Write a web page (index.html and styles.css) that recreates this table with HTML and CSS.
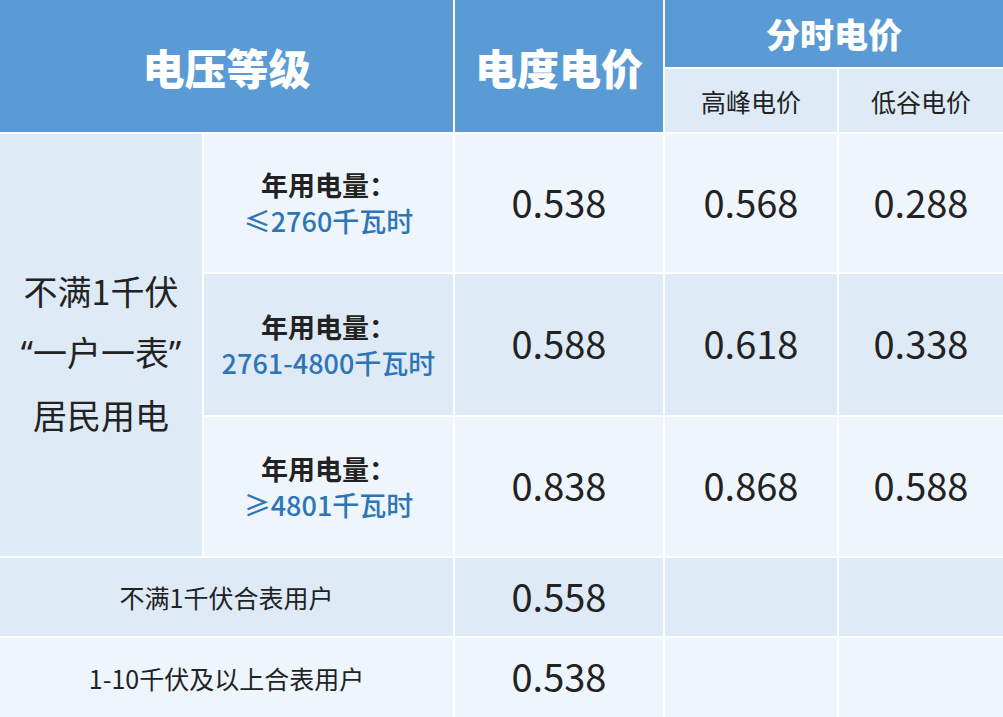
FILE: index.html
```html
<!DOCTYPE html>
<html lang="zh-CN">
<head>
<meta charset="utf-8">
<title>电价表</title>
<link rel="stylesheet" href="styles.css">
</head>
<body>
<div class="table">
  <div class="cell head h-level">电压等级</div>
  <div class="cell head h-price">电度电价</div>
  <div class="cell head h-tou">分时电价</div>
  <div class="cell sub h-peak">高峰电价</div>
  <div class="cell sub h-valley">低谷电价</div>
  <div class="cell dark resid">
    <div class="resid-text">不满1千伏<br><span class="q">“</span>一户一表<span class="q">”</span><br>居民用电</div>
  </div>

  <div class="cell light tier"><span class="tier-label">年用电量：</span><span class="tier-range">≤2760千瓦时</span></div>
  <div class="cell light num">0.538</div>
  <div class="cell light num">0.568</div>
  <div class="cell light num">0.288</div>

  <div class="cell dark tier"><span class="tier-label">年用电量：</span><span class="tier-range">2761-4800千瓦时</span></div>
  <div class="cell dark num">0.588</div>
  <div class="cell dark num">0.618</div>
  <div class="cell dark num">0.338</div>

  <div class="cell light tier"><span class="tier-label">年用电量：</span><span class="tier-range">≥4801千瓦时</span></div>
  <div class="cell light num">0.838</div>
  <div class="cell light num">0.868</div>
  <div class="cell light num">0.588</div>

  <div class="cell dark label wide">不满1千伏合表用户</div>
  <div class="cell dark num">0.558</div>
  <div class="cell dark"></div>
  <div class="cell dark"></div>

  <div class="cell light label wide">1-10千伏及以上合表用户</div>
  <div class="cell light num">0.538</div>
  <div class="cell light"></div>
  <div class="cell light"></div>
</div>
</body>
</html>
```

FILE: styles.css
```css
html, body {
  margin: 0;
  padding: 0;
  background: #ffffff;
  overflow: hidden;
}

body {
  font-family: "Noto Sans CJK SC", sans-serif;
  color: #222222;
}

.table {
  display: grid;
  width: 1003px;
  height: 717px;
  grid-template-columns: 202px 249px 208px 172px 1fr;
  grid-template-rows: 67px 63px 138px 141px 139px 78px 1fr;
  gap: 2px;
  background: #ffffff;
}

.cell {
  display: flex;
  align-items: center;
  justify-content: center;
  text-align: center;
  min-width: 0;
}

.head {
  background: #5b9bd5;
  color: #ffffff;
  font-weight: 900;
}

.h-level {
  grid-column: 1 / 3;
  grid-row: 1 / 3;
  font-size: 42px;
}

.h-price {
  grid-column: 3 / 4;
  grid-row: 1 / 3;
  font-size: 42px;
}

.h-tou {
  grid-column: 4 / 6;
  grid-row: 1 / 2;
  font-size: 34px;
}

.sub {
  background: #deeaf6;
  color: #222222;
  font-size: 25px;
  font-weight: 400;
}

.h-peak {
  grid-column: 4 / 5;
  grid-row: 2 / 3;
}

.h-valley {
  grid-column: 5 / 6;
  grid-row: 2 / 3;
}

.dark {
  background: #deeaf6;
}

.light {
  background: #eef5fc;
}

.resid {
  grid-column: 1 / 2;
  grid-row: 3 / 6;
}

.resid-text {
  font-size: 34px;
  line-height: 61px;
  padding-top: 14px;
}

.q {
  font-family: "Noto Sans", sans-serif;
}

.tier {
  flex-direction: column;
  line-height: 36px;
}

.tier-label {
  font-size: 27px;
  font-weight: 700;
  color: #222222;
}

.tier-range {
  font-size: 27px;
  font-weight: 500;
  color: #2e75b6;
}

.num {
  font-size: 38px;
  color: #222222;
  padding-bottom: 4px;
}

.label {
  font-size: 25px;
}

.wide {
  grid-column: span 2;
}
```
